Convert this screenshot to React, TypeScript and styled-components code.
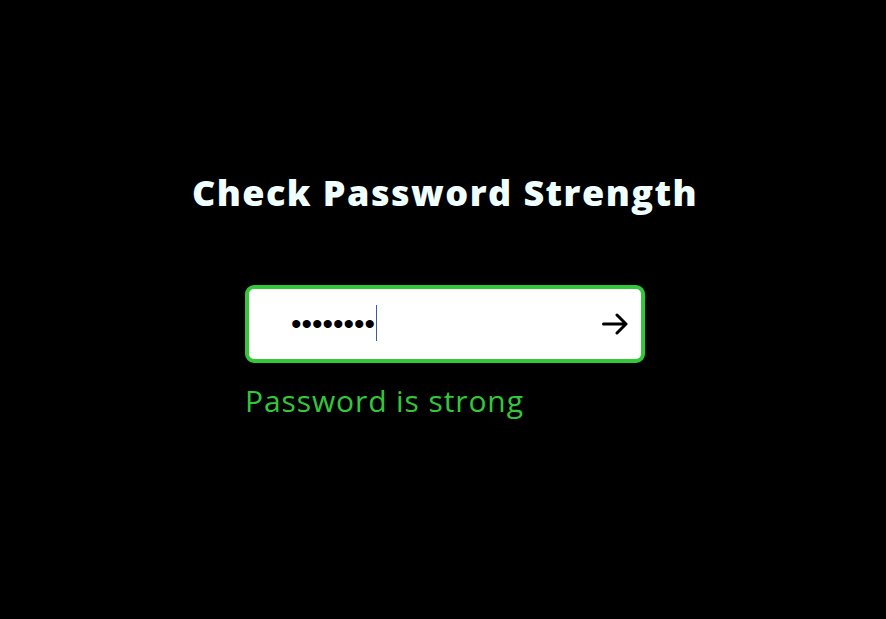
import React, { useEffect, useRef, useState } from "react";
import styled, { createGlobalStyle } from "styled-components";

const Global = createGlobalStyle`
  html, body { margin: 0; padding: 0; background: #000; }
  body { font-family: "Open Sans", "DejaVu Sans", sans-serif; }
  * { box-sizing: border-box; }
`;

const Page = styled.main`
  min-height: 619px;
  background: #000;
  display: flex;
  flex-direction: column;
  align-items: center;
  padding: 166px 0 0 4px;
`;

const Title = styled.h1`
  margin: 0;
  color: #f0ffff;
  font-family: "Open Sans", sans-serif;
  font-weight: 800;
  font-size: 36px;
  line-height: 54px;
  letter-spacing: 1.45px;
`;

const Form = styled.form`
  margin-top: 65px;
  width: 400px;
  display: flex;
  flex-direction: column;
`;

const Field = styled.div<{ $ok: boolean }>`
  position: relative;
  height: 78px;
  border: 4px solid ${(p) => (p.$ok ? "#33c73a" : "#e33")};
  border-radius: 9px;
  background: #fff;
  display: flex;
  align-items: center;
  padding: 0 13px 0 42px;
`;

const Input = styled.input`
  flex: 1;
  min-width: 0;
  border: none;
  outline: none;
  background: transparent;
  font-family: "Liberation Sans", Arial, sans-serif;
  font-size: 30px;
  color: #000;
  caret-color: transparent;
  padding: 0;
  height: 36px;
`;

const Caret = styled.span`
  position: absolute;
  top: 16px;
  width: 1px;
  height: 36px;
  background: #3b5ba8;
  pointer-events: none;
`;

const Submit = styled.button`
  border: none;
  background: transparent;
  padding: 0;
  display: flex;
  align-items: center;
  color: #000;
  cursor: pointer;
`;

const Status = styled.p<{ $ok: boolean }>`
  margin: 18px 0 0;
  color: ${(p) => (p.$ok ? "#33c73a" : "#e33")};
  font-family: "Open Sans", sans-serif;
  font-size: 30px;
  font-weight: 400;
  line-height: 40px;
  letter-spacing: 0.9px;
`;

const Arrow = () => (
  <svg width="26" height="22" viewBox="0 0 26 22" fill="none" stroke="currentColor"
    strokeWidth="3" strokeLinecap="round" strokeLinejoin="round">
    <path d="M1.5 11H24M15 2l9 9-9 9" />
  </svg>
);

export default function App() {
  const [pw, setPw] = useState("Abc@1234");
  const ref = useRef<HTMLInputElement>(null);
  useEffect(() => {
    ref.current?.focus();
  }, []);
  const ok = true;
  const caretLeft = 42 + pw.length * 10.5 + 1;
  return (
    <>
      <Global />
      <Page>
        <Title>Check Password Strength</Title>
        <Form onSubmit={(e) => e.preventDefault()}>
          <Field $ok={ok}>
            <Input
              ref={ref}
              type="password"
              value={pw}
              onChange={(e) => setPw(e.target.value)}
            />
            <Caret style={{ left: caretLeft }} />
            <Submit type="submit" aria-label="Check">
              <Arrow />
            </Submit>
          </Field>
          <Status $ok={ok}>Password is strong</Status>
        </Form>
      </Page>
    </>
  );
}
